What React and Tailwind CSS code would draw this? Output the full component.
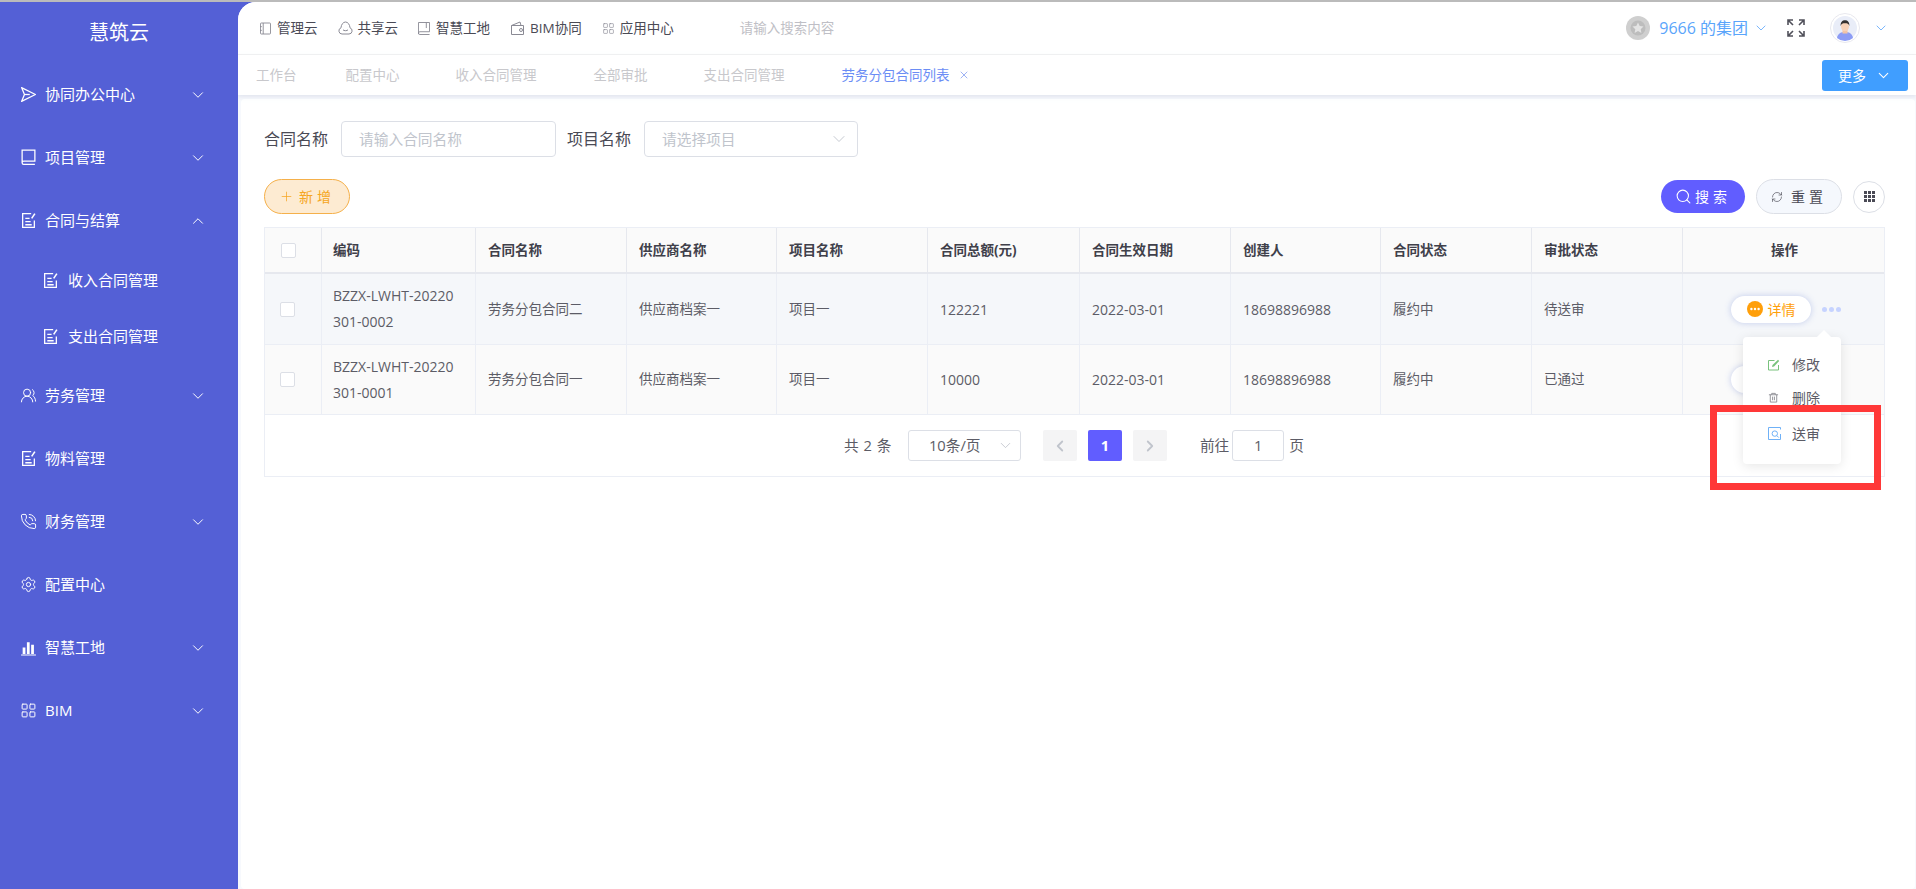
import {
  ChevronDown,
  ChevronLeft,
  ChevronRight,
  ChevronUp,
  LayoutGrid,
  PhoneCall,
  Plus,
  RefreshCw,
  Search,
  Settings,
  UsersRound,
  X,
} from 'lucide-react';

function PlaneIcon({ className }) {
  return (
    <svg viewBox="0 0 16 16" fill="none" stroke="currentColor" strokeWidth="1.2" className={className}>
      <path d="M1.5 1.5 14.5 8 1.5 14.5 4.2 8z" strokeLinejoin="round" />
      <path d="M4.2 8h5" />
    </svg>
  );
}

function BookIcon({ className }) {
  return (
    <svg viewBox="0 0 14 16" fill="none" stroke="currentColor" strokeWidth="1.2" className={className}>
      <path d="M1 13V1h12v10.5H2.5A1.5 1.5 0 0 0 1 13a1.5 1.5 0 0 0 1.5 1.5H13" />
    </svg>
  );
}

function ContractIcon({ className }) {
  return (
    <svg viewBox="0 0 16 16" fill="none" stroke="currentColor" strokeWidth="1.2" className={className}>
      <path d="M13.5 8v6.5h-11v-13h8" />
      <path d="M5 6h4M5 9h5M5 12h6" />
      <path d="M11 6 14 1.5" strokeWidth="1.5" />
    </svg>
  );
}

function BarsIcon({ className }) {
  return (
    <svg viewBox="0 0 16 16" fill="currentColor" className={className}>
      <path d="M2.5 8h2.6v6H2.5zM6.5 3h2.6v11H6.5zM10.5 5.5h2.6V14h-2.6zM1 14.6h14v1H1z" />
    </svg>
  );
}

function NotebookIcon({ className }) {
  return (
    <svg viewBox="0 0 12 14" fill="none" stroke="currentColor" strokeWidth="1" className={className}>
      <rect x="0.5" y="1" width="11" height="12" rx="1" />
      <path d="M3.5 1v12M0 5h2M0 9h2" />
    </svg>
  );
}

function SmileCloudIcon({ className }) {
  return (
    <svg viewBox="0 0 15 14" fill="none" stroke="currentColor" strokeWidth="1" className={className}>
      <path d="M4 13a3.2 3.2 0 0 1-1-6.2C3.2 3.500 5.200 1 7.500 1s4.300 2.500 4.500 5.800a3.200 3.200 0 0 1-1 6.200z" />
      <path d="M5 8.800c.8 1.200 4.200 1.200 5 0" />
    </svg>
  );
}

function FlatBookIcon({ className }) {
  return (
    <svg viewBox="0 0 13 14" fill="none" stroke="currentColor" strokeWidth="1" className={className}>
      <path d="M.5 13V.5h12v10H2A1.500 1.500 0 0 0 .5 12a1.500 1.500 0 0 0 1.500 1.500h10.500" />
      <path d="M9 .5v6" />
    </svg>
  );
}

function WalletIcon({ className }) {
  return (
    <svg viewBox="0 0 13 14" fill="none" stroke="currentColor" strokeWidth="1" className={className}>
      <path d="M.5 4.500h12v9H.5zM.5 4.500 9 1l1 3.500" />
      <circle cx="10" cy="9" r="1.500" />
    </svg>
  );
}

function ExpandIcon({ className }) {
  return (
    <svg viewBox="0 0 18 18" fill="none" stroke="currentColor" strokeWidth="1.6" className={className}>
      <path d="M1 6V1h5M1 1l5 5M12 1h5v5M17 1l-5 5M1 12v5h5M1 17l5-5M12 17h5v-5M17 17l-5-5" />
    </svg>
  );
}

function MedalIcon() {
  return (
    <svg viewBox="0 0 24 24" className="h-6 w-6 shrink-0">
      <circle cx="12" cy="12" r="12" fill="#cfcfcf" />
      <circle cx="12" cy="12" r="7.5" fill="#bdbdbd" />
      <path d="m12 6.500 1.700 3.600 3.800.5-2.800 2.600.7 3.800-3.400-1.900-3.400 1.900.7-3.800-2.800-2.600 3.800-.5z" fill="#e4e4e4" />
    </svg>
  );
}

function AvatarIcon() {
  return (
    <svg viewBox="0 0 30 30" className="h-[30px] w-[30px] shrink-0">
      <circle cx="15" cy="15" r="14.5" fill="#fff" stroke="#e8e8ee" />
      <circle cx="15" cy="15" r="12" fill="#e9edf8" />
      <path d="M7 25c1-5 4-6 8-6s7 1 8 6a12 12 0 0 1-16 0" fill="#8c9cf5" />
      <path d="M12.500 16h5v4.500h-5z" fill="#f3c3a4" />
      <ellipse cx="15" cy="13.500" rx="4" ry="4.800" fill="#f7d2b8" />
      <path d="M10.700 13c-.4-4 1.700-5.800 4.300-5.800s4.700 1.800 4.300 5.800c-.6-2.200-2-2.700-4.300-2.700s-3.700.5-4.300 2.700" fill="#33302f" />
    </svg>
  );
}

function DotsCircle() {
  return (
    <svg viewBox="0 0 16 16" className="h-4 w-4 shrink-0">
      <circle cx="8" cy="8" r="8" fill="#ff9f0a" />
      <circle cx="4.400" cy="8" r="1.200" fill="#fff" />
      <circle cx="8" cy="8" r="1.200" fill="#fff" />
      <circle cx="11.600" cy="8" r="1.200" fill="#fff" />
    </svg>
  );
}

function EditIcon() {
  return (
    <svg viewBox="0 0 12 12" fill="none" stroke="#79c27d" strokeWidth="1" className="h-3 w-3">
      <path d="M10.500 6v5h-10V1.500h6" />
      <path d="M4 8l.5-2L10 .8l1.200 1.200L6 7.500z" fill="#79c27d" stroke="none" />
    </svg>
  );
}

function TrashIcon() {
  return (
    <svg viewBox="0 0 12 12" fill="none" stroke="#8d8d94" strokeWidth="1" className="h-[11px] w-[11px]">
      <path d="M1 3h10M4 3V1.500h4V3M2.500 3v8h7V3M5 5v4M7 5v4" />
    </svg>
  );
}

function ReviewIcon() {
  return (
    <svg viewBox="0 0 13 13" fill="none" stroke="#6fb1f7" strokeWidth="1" className="h-[13px] w-[13px]">
      <path d="M12.500 7v5.500H.5V.5h12v2" />
      <circle cx="6.800" cy="6.600" r="2.700" />
      <path d="m8.800 8.600 2 2" />
    </svg>
  );
}

function DenseGridIcon() {
  return (
    <svg viewBox="0 0 11 11" fill="#4a4a55" className="h-[11px] w-[11px]">
      <path d="M0 0h3v3H0zM4 0h3v3H4zM8 0h3v3H8zM0 4h3v3H0zM4 4h3v3H4zM8 4h3v3H8zM0 8h3v3H0zM4 8h3v3H4zM8 8h3v3H8z" />
    </svg>
  );
}

const menu = [
  { label: '协同办公中心', icon: PlaneIcon, arrow: true },
  { label: '项目管理', icon: BookIcon, arrow: true },
  { label: '合同与结算', icon: ContractIcon, open: true, children: ['收入合同管理', '支出合同管理'] },
  { label: '劳务管理', icon: UsersRound, arrow: true },
  { label: '物料管理', icon: ContractIcon },
  { label: '财务管理', icon: PhoneCall, arrow: true },
  { label: '配置中心', icon: Settings },
  { label: '智慧工地', icon: BarsIcon, arrow: true },
  { label: 'BIM', icon: LayoutGrid, arrow: true },
];

const topLinks = [
  { label: '管理云', icon: NotebookIcon, cls: 'w-[11px] h-[13px] mr-[6px]', gap: 'mr-[20px]' },
  { label: '共享云', icon: SmileCloudIcon, cls: 'w-[15px] h-[14px] mr-[5px]', gap: 'mr-[20px]' },
  { label: '智慧工地', icon: FlatBookIcon, cls: 'w-[12px] h-[13px] mr-[6px]', gap: 'mr-[21px]' },
  { label: 'BIM协同', icon: WalletIcon, cls: 'w-[13px] h-[14px] mr-[6px]', gap: 'mr-[20px]' },
  { label: '应用中心', icon: LayoutGrid, cls: 'w-[13px] h-[13px] mr-[5px]', gap: 'mr-[20px]' },
];

const tabs = [
  { label: '工作台', cls: 'mr-[49px]' },
  { label: '配置中心', cls: 'mr-[56px]' },
  { label: '收入合同管理', cls: 'mr-[57px]' },
  { label: '全部审批', cls: 'mr-[56px]' },
  { label: '支出合同管理', cls: 'mr-[57px]' },
];

const columns = ['编码', '合同名称', '供应商名称', '项目名称', '合同总额(元)', '合同生效日期', '创建人', '合同状态', '审批状态'];

const rows = [
  {
    code: ['BZZX-LWHT-20220', '301-0002'],
    cells: ['劳务分包合同二', '供应商档案一', '项目一', '122221', '2022-03-01', '18698896988', '履约中', '待送审'],
    rowCls: 'h-[71px] bg-[#f5f7fa]',
  },
  {
    code: ['BZZX-LWHT-20220', '301-0001'],
    cells: ['劳务分包合同一', '供应商档案一', '项目一', '10000', '2022-03-01', '18698896988', '履约中', '已通过'],
    rowCls: 'h-[70px] bg-[#fafafa]',
  },
];

const gridCols = 'grid grid-cols-[57px_154px_151px_150px_151px_152px_151px_150px_151px_151px_203px]';

function Sidebar() {
  return (
    <aside className="w-[238px] shrink-0 text-white">
      <div className="flex h-[61px] items-center justify-center text-[20px] leading-none">慧筑云</div>
      {menu.map(item => {
        const Icon = item.icon;
        return (
          <div key={item.label}>
            <div className="flex h-[63px] items-center pl-[20px] pr-[31px] text-[15px]">
              <Icon className="mr-[8px] h-[17px] w-[17px] shrink-0" strokeWidth={1.4} />
              <span className="flex-1">{item.label}</span>
              {item.arrow && <ChevronDown className="h-[18px] w-[18px]" strokeWidth={1.3} />}
              {item.open && <ChevronUp className="h-[18px] w-[18px]" strokeWidth={1.3} />}
            </div>
            {item.children && item.children.map(child => (
              <div key={child} className="flex h-[56px] items-center pl-[42px] text-[15px]">
                <ContractIcon className="mr-[9px] h-[17px] w-[17px] shrink-0" />
                <span>{child}</span>
              </div>
            ))}
          </div>
        );
      })}
    </aside>
  );
}

function TopBar() {
  return (
    <div className="flex h-[53px] items-center border-b border-[#f2f2f2] bg-white pl-[22px] pr-[27px]">
      {topLinks.map(link => {
        const Icon = link.icon;
        return (
          <div key={link.label} className={`${link.gap} flex items-center text-[13.5px] text-[#4a4a55]`}>
            <Icon className={`${link.cls} text-[#8a8a94]`} strokeWidth={1.2} />
            <span>{link.label}</span>
          </div>
        );
      })}
      <span className="ml-[46px] text-[13.5px] text-[#bfbfc6]">请输入搜索内容</span>
      <div className="ml-auto flex items-center">
        <MedalIcon />
        <span className="ml-[9px] text-[16px] text-[#5aa5fb]">9666 的集团</span>
        <ChevronDown className="ml-[5px] h-[16px] w-[16px] text-[#5aa5fb]" strokeWidth={1.2} />
        <ExpandIcon className="ml-[18px] h-[18px] w-[18px] text-[#50505a]" />
        <div className="ml-[25px]"><AvatarIcon /></div>
        <ChevronDown className="ml-[13px] h-[16px] w-[16px] text-[#5aa5fb]" strokeWidth={1.2} />
      </div>
    </div>
  );
}

function TabBar() {
  return (
    <div className="relative z-10 flex h-[40px] items-center bg-white pl-[18px] pr-[8px] shadow-[0_2px_4px_rgba(210,214,228,0.6)]">
      {tabs.map(tab => (
        <span key={tab.label} className={`${tab.cls} text-[13.5px] text-[#c8c8cc]`}>{tab.label}</span>
      ))}
      <span className="text-[13.5px] text-[#6b8df5]">劳务分包合同列表</span>
      <X className="ml-[8px] h-[12px] w-[12px] text-[#7d98f0]" strokeWidth={1.5} />
      <button className="ml-auto flex h-[31px] w-[86px] items-center justify-center gap-[9px] rounded-[3px] bg-[#409eff] text-[14px] text-white">
        更多
        <ChevronDown className="h-[17px] w-[17px]" strokeWidth={1.5} />
      </button>
    </div>
  );
}

function Filters() {
  return (
    <div className="flex items-center text-[16px] text-[#4a4a55]">
      <span className="mr-[13px]">合同名称</span>
      <div className="flex h-[36px] w-[215px] items-center rounded-[4px] border border-[#dcdfe6] pl-[17px] text-[14.7px] text-[#c0c4cc]">
        请输入合同名称
      </div>
      <span className="ml-[11px] mr-[13px]">项目名称</span>
      <div className="flex h-[36px] w-[214px] items-center justify-between rounded-[4px] border border-[#dcdfe6] pl-[17px] pr-[8px] text-[14.7px] text-[#c0c4cc]">
        请选择项目
        <ChevronDown className="h-[20px] w-[20px]" strokeWidth={1.1} />
      </div>
    </div>
  );
}

function Actions() {
  return (
    <div className="mt-[22px] flex h-[35px] items-center">
      <button className="flex h-[35px] w-[86px] items-center justify-center gap-[5px] rounded-full border border-[#f5b04a] bg-[#fdebd2] text-[14px] tracking-[4px] text-[#f5a623]">
        <Plus className="h-[15px] w-[15px]" strokeWidth={1.2} />
        新增
      </button>
      <button className="ml-auto flex h-[33px] w-[84px] items-center justify-center gap-[3px] rounded-full bg-[#615dff] text-[14px] tracking-[4px] text-white">
        <Search className="h-[17px] w-[17px]" strokeWidth={1.5} />
        搜索
      </button>
      <button className="ml-[11px] flex h-[35px] w-[86px] items-center justify-center gap-[8px] rounded-full border border-[#dcdfe6] bg-[#f5f8fd] text-[14px] tracking-[4px] text-[#4a4a55]">
        <RefreshCw className="h-[12px] w-[12px]" strokeWidth={1.3} />
        重置
      </button>
      <button className="ml-[11px] flex h-[32px] w-[32px] items-center justify-center rounded-full border border-[#dcdfe6] bg-white">
        <DenseGridIcon />
      </button>
    </div>
  );
}

function Popover() {
  return (
    <div className="absolute left-[60px] top-[63px] z-20 h-[127px] w-[98px] rounded-[4px] bg-white text-[14px] text-[#5c5c66] shadow-[0_2px_12px_rgba(0,0,0,0.1)]">
      <div className="absolute -top-[5px] left-[76px] h-[10px] w-[10px] rotate-45 bg-white" />
      <div className="relative mt-[11px] flex h-[33px] items-center pl-[25px]">
        <span className="flex w-[24px]"><EditIcon /></span>修改
      </div>
      <div className="relative flex h-[33px] items-center pl-[25px]">
        <span className="flex w-[24px]"><TrashIcon /></span>删除
      </div>
      <div className="relative flex h-[36px] items-center pl-[25px] pt-[3px]">
        <span className="flex w-[24px]"><ReviewIcon /></span>送审
      </div>
    </div>
  );
}

function DetailPill({ withMenu }) {
  return (
    <div className="relative flex h-full items-center justify-center">
      <div className="ml-[3px] flex h-[27px] w-[80px] items-center justify-center gap-[5px] rounded-full bg-white text-[14px] text-[#ff9f0a] shadow-[0_0_6px_rgba(130,150,220,0.45)]">
        <DotsCircle />
        详情
      </div>
      <div className="ml-[11px] flex gap-[2px]">
        <span className="h-[5px] w-[5px] rounded-full bg-[#c6d3ff]" />
        <span className="h-[5px] w-[5px] rounded-full bg-[#c6d3ff]" />
        <span className="h-[5px] w-[5px] rounded-full bg-[#c6d3ff]" />
      </div>
      {withMenu && <Popover />}
    </div>
  );
}

function Checkbox() {
  return <span className="block h-[15px] w-[15px] rounded-[2px] border border-[#dcdfe6] bg-white" />;
}

function ContractTable() {
  return (
    <div className="mt-[13px] w-[1621px] border border-[#ebeef5] bg-white">
      <div className={`${gridCols} h-[46px] border-b-2 border-[#e6e8ee] bg-[#fafafa] text-[13.5px] font-bold text-[#40404a]`}>
        <div className="flex items-center justify-center border-r border-[#e6e8ee] pr-[9px]">
          <Checkbox />
        </div>
        {columns.map((col, i) => (
          <div key={col} className={`flex items-center border-r border-[#e6e8ee] ${i === 0 ? 'pl-[11px]' : 'pl-[12px]'}`}>{col}</div>
        ))}
        <div className="flex items-center justify-center">操作</div>
      </div>
      {rows.map((row, i) => (
        <div key={row.code[1]} className={`${gridCols} ${row.rowCls} border-b border-[#ebeef5] text-[13.5px] text-[#5c5c66]`}>
          <div className="flex items-center justify-center border-r border-[#ebeef5] pr-[12px]">
            <Checkbox />
          </div>
          <div className="flex flex-col justify-center border-r border-[#ebeef5] pl-[11px] text-[14px] leading-[26px]">
            <span>{row.code[0]}</span>
            <span>{row.code[1]}</span>
          </div>
          {row.cells.map((cell, j) => (
            <div key={j} className={`flex items-center border-r border-[#ebeef5] pl-[12px] ${j >= 3 && j <= 5 ? 'text-[14px]' : ''}`}>{cell}</div>
          ))}
          <DetailPill withMenu={i === 0} />
        </div>
      ))}
      <Pagination />
    </div>
  );
}

function Pagination() {
  return (
    <div className="flex h-[61px] items-center pl-[579px] text-[14.7px] text-[#5c5c66]">
      <span className="mr-[16px] tracking-[0.5px]">共 2 条</span>
      <div className="flex h-[31px] w-[113px] items-center justify-between rounded-[3px] border border-[#dcdfe6] pl-[20px] pr-[6px]">
        10条/页
        <ChevronDown className="h-[17px] w-[17px] text-[#c0c4cc]" strokeWidth={1.2} />
      </div>
      <div className="ml-[22px] flex h-[31px] w-[34px] items-center justify-center rounded-[2px] bg-[#f4f4f5] text-[#c0c4cc]">
        <ChevronLeft className="h-[18px] w-[18px]" strokeWidth={2.4} />
      </div>
      <div className="ml-[11px] flex h-[31px] w-[34px] items-center justify-center rounded-[2px] bg-[#615dff] font-bold text-white">1</div>
      <div className="ml-[11px] flex h-[31px] w-[34px] items-center justify-center rounded-[2px] bg-[#f4f4f5] text-[#c0c4cc]">
        <ChevronRight className="h-[18px] w-[18px]" strokeWidth={2.4} />
      </div>
      <span className="ml-[33px]">前往</span>
      <div className="ml-[3px] flex h-[31px] w-[52px] items-center justify-center rounded-[3px] border border-[#dcdfe6]">1</div>
      <span className="ml-[5px]">页</span>
    </div>
  );
}

export default function App() {
  return (
    <div className="relative flex h-screen flex-col overflow-hidden bg-[#5460d6] font-['Open_Sans','Noto_Sans_CJK_SC',sans-serif]">
      <div className="h-[2px] shrink-0 bg-[#bbbbbb]" />
      <div className="flex min-h-0 flex-1">
        <Sidebar />
        <main className="flex min-w-0 flex-1 flex-col overflow-hidden rounded-tl-[18px] bg-[#f7f9fd]">
          <TopBar />
          <TabBar />
          <div className="ml-[3px] mr-[1px] mt-[4px] flex-1 rounded-[4px] bg-white pl-[23px] pt-[22px] pr-[30px]">
            <Filters />
            <Actions />
            <ContractTable />
          </div>
        </main>
      </div>
      {/* annotation drawn over the screenshot */}
      <div className="absolute left-[1710px] top-[405px] z-30 h-[85px] w-[171px] border-[7px] border-[#ff3838]" />
    </div>
  );
}
